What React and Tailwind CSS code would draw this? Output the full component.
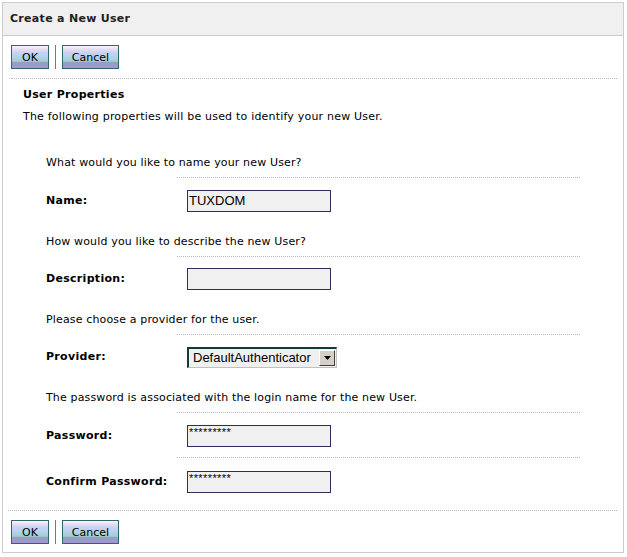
import React from 'react';

const font = "font-['DejaVu_Sans',Verdana,sans-serif]";

const ActionButtons = () => (
  <div className="flex items-center h-[24px] ml-[8px]">
    <button className="w-[38px] h-[24px] border border-[#336666] text-[11px] text-black pt-[2px] bg-[linear-gradient(to_bottom,#f6f6ff_0%,#e6def0_14%,#cdd2f2_30%,#b2d2f4_48%,#a2d2c8_66%,#a2d2c8_70%,#9a9acc_72%,#9a9acc_100%)]">
      OK
    </button>
    <div className="w-px h-[24px] bg-[#777] mx-[6px]" />
    <button className="w-[57px] h-[24px] border border-[#336666] text-[11px] text-black pt-[2px] bg-[linear-gradient(to_bottom,#f6f6ff_0%,#e6def0_14%,#cdd2f2_30%,#b2d2f4_48%,#a2d2c8_66%,#a2d2c8_70%,#9a9acc_72%,#9a9acc_100%)]">
      Cancel
    </button>
  </div>
);

const Question = ({ text, mt }) => (
  <>
    <div className={`${mt} ml-[43px] h-[16px] leading-[16px] text-[11px] tracking-[0.15px] pt-[2px]`}>{text}</div>
    <div className="mt-[8px] ml-[174px] w-[403px] border-t border-dotted border-[#b8b8b8]" />
  </>
);

const TextField = ({ label, value, mt, password }) => (
  <div className={`${mt} flex items-center ml-[43px] h-[22px]`}>
    <div className="w-[141px] text-[11px] font-bold tracking-[0.3px]">{label}</div>
    <div className="w-[144px] h-[22px] border border-[#2e2e5e] bg-[#f0f0f0] flex">
      {password ? (
        <span className="font-['Liberation_Sans',Arial,sans-serif] text-[11px] leading-[11px] tracking-[0.4px] pl-[1px] pt-[1px]">*********</span>
      ) : (
        <span className="font-['Liberation_Sans',Arial,sans-serif] text-[13px] leading-[20px] pl-[1px]">{value}</span>
      )}
    </div>
  </div>
);

export default function App() {
  return (
    <div className={`w-[627px] h-[557px] bg-white pt-[2px] pl-[2px] text-black ${font}`}>
      <div className="w-[622px] h-[551px] border border-[#cccccc] flex flex-col">
        <div className="h-[33px] bg-[#f0f0f0] border-b border-[#cccccc] flex items-center pl-[7px] pt-[1px] text-[11px] font-bold tracking-[0.3px] text-[#222]">
          Create a New User
        </div>

        <div className="mt-[9px]">
          <ActionButtons />
        </div>
        <div className="mt-[9px] ml-[8px] w-[606px] border-t border-dotted border-[#b8b8b8]" />

        <div className="mt-[6px] ml-[20px] h-[16px] leading-[16px] pt-[2px] text-[11px] font-bold tracking-[0.3px]">User Properties</div>
        <div className="mt-[6px] ml-[20px] h-[16px] leading-[16px] pt-[2px] text-[11px] tracking-[0.2px]">
          The following properties will be used to identify your new User.
        </div>

        <Question mt="mt-[30px]" text="What would you like to name your new User?" />
        <TextField mt="mt-[12px]" label="Name:" value="TUXDOM" />

        <Question mt="mt-[20px]" text="How would you like to describe the new User?" />
        <TextField mt="mt-[11px]" label="Description:" value="" />

        <Question mt="mt-[20px]" text="Please choose a provider for the user." />
        <div className="mt-[12px] flex items-center ml-[43px] h-[21px]">
          <div className="w-[141px] text-[11px] font-bold tracking-[0.3px]">Provider:</div>
          <div className="w-[150px] h-[21px] flex items-center bg-[#f0f0f0] border-t-2 border-l-2 border-[#0f3b3b] border-b border-r border-b-[#c0c0c0] border-r-[#c0c0c0]">
            <span className="flex-1 font-['Liberation_Sans',Arial,sans-serif] text-[13px] pl-[4px] leading-[18px]">DefaultAuthenticator</span>
            <div className="w-[16px] h-[16px] mr-[1px] bg-[#d4d0c8] border border-t-white border-l-white border-b-[#404040] border-r-[#404040] flex items-center justify-center">
              <svg width="7" height="4" viewBox="0 0 7 4">
                <path d="M0 0 H7 L3.5 4 Z" fill="#000" />
              </svg>
            </div>
          </div>
        </div>

        <Question mt="mt-[20px]" text="The password is associated with the login name for the new User." />
        <TextField mt="mt-[12px]" label="Password:" password />
        <div className="mt-[10px] ml-[174px] w-[403px] border-t border-dotted border-[#b8b8b8]" />
        <TextField mt="mt-[13px]" label="Confirm Password:" password />

        <div className="mt-[17px] ml-[5px] w-[609px] border-t border-dotted border-[#b8b8b8]" />
        <div className="mt-[9px]">
          <ActionButtons />
        </div>
      </div>
    </div>
  );
}
